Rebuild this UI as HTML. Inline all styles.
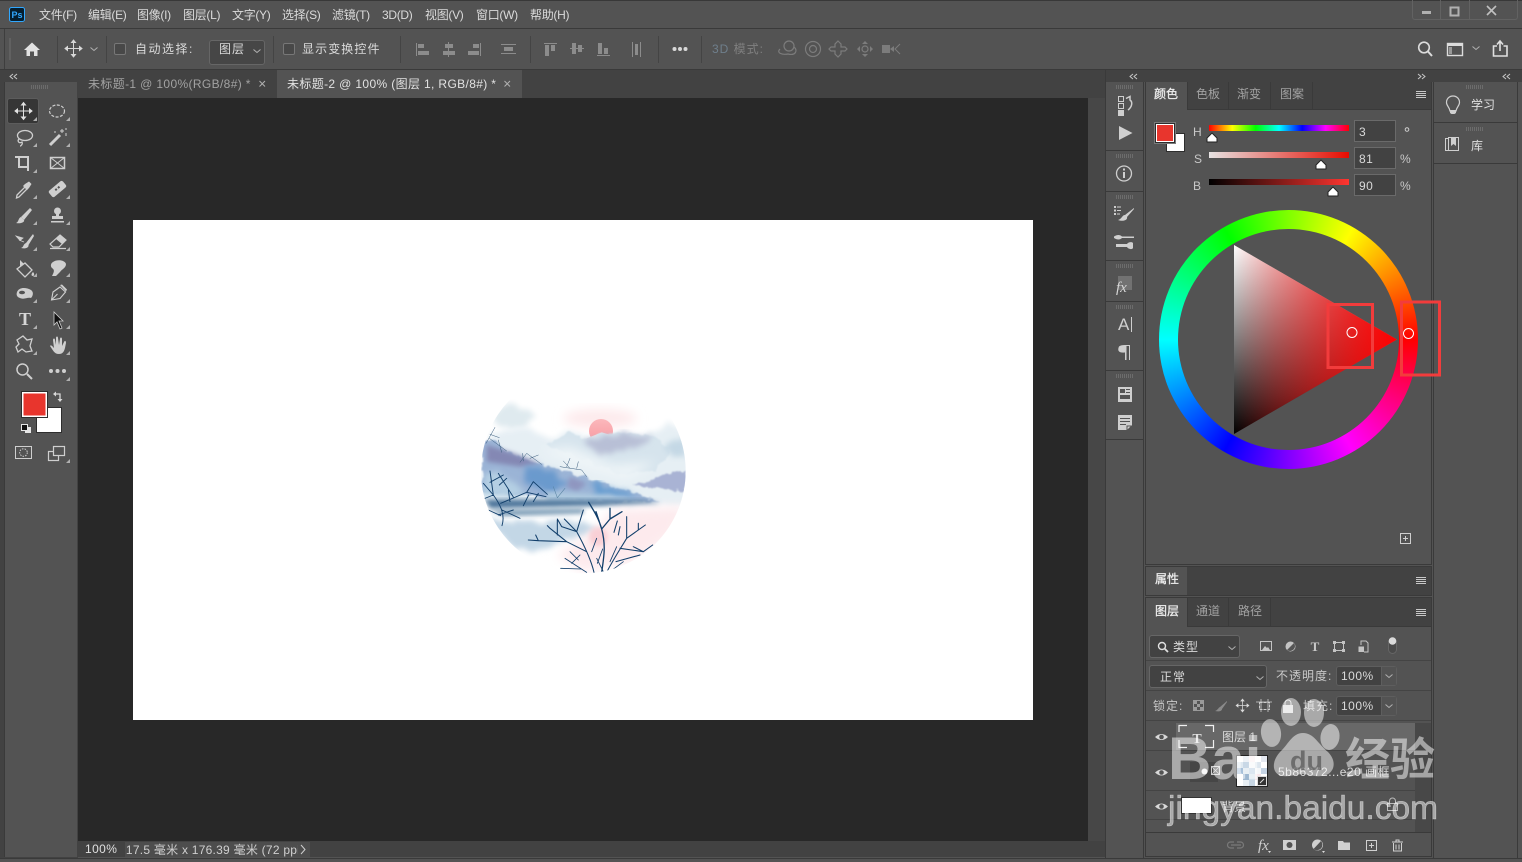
<!DOCTYPE html>
<html lang="zh">
<head>
<meta charset="utf-8">
<title>Photoshop</title>
<style>
html,body{margin:0;padding:0;width:1522px;height:862px;overflow:hidden;background:#535353}
body{position:relative;font-family:"Liberation Sans","Noto Sans CJK SC",sans-serif;font-size:12px;color:#d8d8d8}
.b{position:absolute;box-sizing:border-box}
.t{position:absolute;white-space:nowrap;line-height:14px;font-size:12px;color:#dadada}
.m{letter-spacing:-.3px}
.d{color:#a2a2a2}
.dd{color:#808080}
.s{-webkit-text-stroke:.3px currentColor;color:#ececec}
svg{position:absolute;left:0;top:0;overflow:visible}
.wm{position:absolute;white-space:nowrap;color:rgba(255,255,255,.5);line-height:1}
</style>
</head>
<body>
<!-- frame lines -->
<div class="b" style="left:0;top:0;width:1522px;height:1px;background:#383838"></div>
<div class="b" style="left:0;top:28px;width:1522px;height:1px;background:#3a3a3a"></div>
<div class="b" style="left:4px;top:29px;width:1518px;height:40px;background:#535353;border-left:1px solid #3e3e3e"></div>
<div class="b" style="left:0;top:69px;width:1522px;height:1px;background:#3a3a3a"></div>
<!-- window control box -->
<div class="b" style="left:1412px;top:0;width:106px;height:20px;border:1px solid #626262;border-top:0;border-radius:0 0 3px 3px"></div>
<div class="b" style="left:1440px;top:0;width:1px;height:19px;background:#626262"></div>
<div class="b" style="left:1469px;top:0;width:1px;height:19px;background:#626262"></div>

<!-- left tools -->
<div class="b" style="left:0;top:70px;width:78px;height:788px;background:#424242"></div>
<div class="b" style="left:4px;top:82px;width:73px;height:775px;background:#535353;border-left:1px solid #3a3a3a"></div>
<div class="b" style="left:7px;top:98px;width:32px;height:26px;background:#363636;border:1px solid #5c5c5c;border-radius:3px"></div>

<!-- tabs -->
<div class="b" style="left:78px;top:70px;width:1027px;height:28px;background:#424242"></div>
<div class="b" style="left:277px;top:70px;width:245px;height:28px;background:#535353"></div>
<!-- canvas -->
<div class="b" style="left:78px;top:98px;width:1010px;height:743px;background:#282828"></div>
<div class="b" style="left:1088px;top:98px;width:17px;height:743px;background:#474747"></div>
<div class="b" style="left:133px;top:220px;width:900px;height:500px;background:#fff"></div>
<!-- status -->
<div class="b" style="left:78px;top:841px;width:1027px;height:16px;background:#424242"></div>
<div class="b" style="left:125px;top:842px;width:185px;height:15px;background:#4d4d4d"></div>
<div class="b" style="left:0;top:858px;width:1522px;height:1px;background:#3a3a3a"></div>

<!-- right dock -->
<div class="b" style="left:1105px;top:70px;width:417px;height:12px;background:#424242"></div>
<div class="b" style="left:1105px;top:70px;width:1px;height:788px;background:#3a3a3a"></div>
<div class="b" style="left:1106px;top:82px;width:38px;height:776px;background:#535353;border-right:1px solid #3a3a3a"></div>
<div class="b" style="left:1106px;top:150px;width:37px;height:1px;background:#3a3a3a"></div>
<div class="b" style="left:1106px;top:191px;width:37px;height:1px;background:#3a3a3a"></div>
<div class="b" style="left:1106px;top:260px;width:37px;height:1px;background:#3a3a3a"></div>
<div class="b" style="left:1106px;top:301px;width:37px;height:1px;background:#3a3a3a"></div>
<div class="b" style="left:1106px;top:370px;width:37px;height:1px;background:#3a3a3a"></div>
<div class="b" style="left:1106px;top:439px;width:37px;height:1px;background:#3a3a3a"></div>

<div class="b" style="left:1145px;top:82px;width:287px;height:483px;border:1px solid #3a3a3a;border-top:0;background:#535353"></div>
<div class="b" style="left:1146px;top:82px;width:285px;height:28px;background:#424242;border-bottom:1px solid #3a3a3a"></div>
<div class="b" style="left:1146px;top:82px;width:41px;height:28px;background:#535353"></div>
<div class="b" style="left:1187px;top:82px;width:1px;height:27px;background:#3a3a3a"></div>
<div class="b" style="left:1228px;top:82px;width:1px;height:27px;background:#3a3a3a"></div>
<div class="b" style="left:1270px;top:82px;width:1px;height:27px;background:#3a3a3a"></div>
<div class="b" style="left:1312px;top:82px;width:1px;height:27px;background:#3a3a3a"></div>

<!-- sliders -->
<div class="b" style="left:1209px;top:125px;width:140px;height:6px;background:linear-gradient(to right,#f00,#ff0 16.6%,#0f0 33.3%,#0ff 50%,#00f 66.6%,#f0f 83.3%,#f00)"></div>
<div class="b" style="left:1209px;top:152px;width:140px;height:6px;background:linear-gradient(to right,#e6e2e2,#e60c00)"></div>
<div class="b" style="left:1209px;top:179px;width:140px;height:6px;background:linear-gradient(to right,#000,#ff3530)"></div>
<div class="b" style="left:1354px;top:120px;width:42px;height:22px;background:#424242;border:1px solid #6a6a6a"></div>
<div class="b" style="left:1354px;top:147px;width:42px;height:22px;background:#424242;border:1px solid #6a6a6a"></div>
<div class="b" style="left:1354px;top:174px;width:42px;height:22px;background:#424242;border:1px solid #6a6a6a"></div>
<div class="b" style="left:1166px;top:133px;width:19px;height:19px;background:#fff;border:1px solid #2e2e2e"></div>
<div class="b" style="left:1156px;top:124px;width:18px;height:18px;background:#e8352d;border:1px solid #fff;outline:1px solid #2e2e2e;box-shadow:0 0 0 2px #7a7a7a"></div>

<!-- wheel -->
<div class="b" style="left:1159px;top:210px;width:259px;height:259px;border-radius:50%;background:conic-gradient(from 90deg,#f00,#f0f 60deg,#00f 120deg,#0ff 180deg,#0f0 240deg,#ff0 300deg,#f00 360deg)"></div>
<div class="b" style="left:1178px;top:229px;width:221px;height:221px;border-radius:50%;background:#535353"></div>
<div class="b" style="left:1234px;top:245px;width:163px;height:189px;clip-path:polygon(0 0,100% 50%,0 100%);background:linear-gradient(to right,rgba(255,0,0,0),rgba(255,0,0,.3) 25%,rgba(255,0,0,.56) 50%,rgba(255,0,0,.8) 75%,rgba(255,0,0,1)),linear-gradient(#fff,#000)"></div>

<!-- property & layers panels -->
<div class="b" style="left:1145px;top:566px;width:287px;height:30px;background:#424242;border:1px solid #3a3a3a"></div>
<div class="b" style="left:1146px;top:567px;width:41px;height:28px;background:#535353"></div>
<div class="b" style="left:1145px;top:597px;width:287px;height:260px;background:#535353;border:1px solid #3a3a3a"></div>
<div class="b" style="left:1146px;top:598px;width:285px;height:29px;background:#424242;border-bottom:1px solid #3a3a3a"></div>
<div class="b" style="left:1146px;top:598px;width:41px;height:29px;background:#535353"></div>
<div class="b" style="left:1228px;top:598px;width:1px;height:28px;background:#3a3a3a"></div>
<div class="b" style="left:1187px;top:598px;width:1px;height:28px;background:#3a3a3a"></div>
<div class="b" style="left:1270px;top:598px;width:1px;height:28px;background:#3a3a3a"></div>
<div class="b" style="left:1146px;top:660px;width:285px;height:1px;background:#444"></div>
<div class="b" style="left:1146px;top:690px;width:285px;height:1px;background:#444"></div>
<div class="b" style="left:1146px;top:720px;width:285px;height:1px;background:#444"></div>
<div class="b" style="left:1149px;top:635px;width:91px;height:23px;background:#424242;border:1px solid #666;border-radius:3px"></div>
<div class="b" style="left:1149px;top:665px;width:118px;height:23px;background:#424242;border:1px solid #666;border-radius:3px"></div>
<div class="b" style="left:1336px;top:666px;width:61px;height:20px;background:#424242;border:1px solid #5e5e5e;border-radius:3px"></div>
<div class="b" style="left:1381px;top:667px;width:15px;height:18px;background:#535353;border-left:1px solid #5e5e5e"></div>
<div class="b" style="left:1336px;top:696px;width:61px;height:20px;background:#424242;border:1px solid #5e5e5e;border-radius:3px"></div>
<div class="b" style="left:1381px;top:697px;width:15px;height:18px;background:#535353;border-left:1px solid #5e5e5e"></div>
<!-- layer rows -->
<div class="b" style="left:1176px;top:723px;width:239px;height:27px;background:#686868"></div>
<div class="b" style="left:1415px;top:723px;width:16px;height:109px;background:#484848"></div>
<div class="b" style="left:1146px;top:750px;width:269px;height:1px;background:#444"></div>
<div class="b" style="left:1146px;top:790px;width:269px;height:1px;background:#444"></div>
<div class="b" style="left:1146px;top:819px;width:269px;height:1px;background:#444"></div>
<div class="b" style="left:1146px;top:832px;width:285px;height:1px;background:#3a3a3a"></div>
<div class="b" style="left:1181px;top:797px;width:31px;height:17px;background:#fff;border:1px solid #333"></div>

<!-- far right -->
<div class="b" style="left:1433px;top:82px;width:85px;height:776px;background:#535353;border:1px solid #3a3a3a;border-top:0;border-bottom:0"></div>
<div class="b" style="left:1434px;top:122px;width:83px;height:1px;background:#3a3a3a"></div>
<div class="b" style="left:1434px;top:163px;width:83px;height:1px;background:#3a3a3a"></div>

<!-- option controls -->
<div class="b" style="left:114px;top:43px;width:12px;height:12px;border:1px solid #777;border-radius:2px;background:#484848"></div>
<div class="b" style="left:283px;top:43px;width:12px;height:12px;border:1px solid #777;border-radius:2px;background:#484848"></div>
<div class="b" style="left:209px;top:40px;width:56px;height:25px;background:#464646;border:1px solid #666;border-radius:3px"></div>

<!-- landscape -->
<svg style="left:470px;top:395px" width="230" height="185" viewBox="0 0 690 555">
<defs>
<clipPath id="cc"><circle cx="340" cy="228" r="307"/></clipPath>
<filter id="b6" x="-30%" y="-30%" width="160%" height="160%"><feGaussianBlur stdDeviation="7"/></filter>
<filter id="b14" x="-30%" y="-30%" width="160%" height="160%"><feGaussianBlur stdDeviation="16"/></filter>
<filter id="w" x="-20%" y="-20%" width="140%" height="140%"><feTurbulence type="fractalNoise" baseFrequency=".035" numOctaves="3" seed="4" result="n"/><feDisplacementMap in="SourceGraphic" in2="n" scale="26" xChannelSelector="R" yChannelSelector="G"/><feGaussianBlur stdDeviation="2.500"/></filter>
<filter id="ws" x="-20%" y="-20%" width="140%" height="140%"><feTurbulence type="fractalNoise" baseFrequency=".03" numOctaves="3" seed="9" result="n"/><feDisplacementMap in="SourceGraphic" in2="n" scale="34" xChannelSelector="R" yChannelSelector="G"/><feGaussianBlur stdDeviation="9"/></filter>
<linearGradient id="sun" x1="0" y1="0" x2="0" y2="1"><stop offset="0" stop-color="#fbb8bc"/><stop offset="1" stop-color="#f9989f"/></linearGradient>
</defs>
<g clip-path="url(#cc)">
<ellipse cx="130" cy="65" rx="60" ry="36" fill="#dfeaef" filter="url(#ws)"/>
<ellipse cx="390" cy="70" rx="110" ry="28" fill="#fdeaec" filter="url(#b14)"/>
<path d="M60 120L160 95L240 130L300 110L350 130L400 115L550 120L600 85L660 120L660 330L30 330Z" fill="#e6eff4" filter="url(#ws)"/>
<circle cx="393" cy="108" r="36" fill="url(#sun)"/>
<path d="M350 130L395 112L440 125L440 150L350 150Z" fill="#e2e2e8"/>
<path d="M225 150L300 112L350 130L395 117L480 114L560 125L600 170L560 225L450 240L330 190Z" fill="#d6e4ed" filter="url(#w)"/>
<path d="M345 135L480 116L550 128L490 160L380 180Z" fill="#b8bfd6" filter="url(#ws)"/>
<path d="M585 150L650 125L650 190L605 180Z" fill="#c4d8e5" filter="url(#ws)"/>
<path d="M210 165L300 155L430 210L560 200L470 255L330 215Z" fill="#eff5f8" filter="url(#b14)"/>
<path d="M35 135L70 135L110 170L200 205L280 225L380 262L480 290L570 322L420 320L230 305L35 290Z" fill="#9bb4d6" filter="url(#w)"/>
<path d="M50 150L130 175L210 205L150 215L50 200Z" fill="#8488b4" filter="url(#b6)"/>
<path d="M165 212L240 228L300 262L250 290L165 270Z" fill="#6a9acd" filter="url(#ws)"/>
<path d="M300 245L350 265L320 290L290 275Z" fill="#8f96c0" filter="url(#b6)"/>
<path d="M360 265L470 283L505 308L370 302Z" fill="#639bd0" filter="url(#ws)"/>
<path d="M35 230L110 240L170 305L40 305Z" fill="#b4cfe3" filter="url(#ws)"/>
<path d="M230 290L420 300L520 318L230 318Z" fill="#adc9df" filter="url(#b6)"/>
<path d="M490 272L590 240L650 222L650 290L580 280Z" fill="#a9b3d4" filter="url(#w)"/>
<path d="M45 314L300 314L520 316L572 325L400 332L60 340Z" fill="#4f779c" filter="url(#b6)"/>
<path d="M60 344L340 340L340 356L100 364Z" fill="#7f9fb8" filter="url(#b6)"/>
<path d="M40 372L140 380L340 378L400 400L200 465L140 460Z" fill="#c3d7e6" filter="url(#ws)"/>
<path d="M80 368L330 372" stroke="#f4f7f9" stroke-width="6" fill="none" filter="url(#b6)"/>
<path d="M430 345L650 335L610 420L500 500L340 530L260 480L370 410Z" fill="#fdeaed" filter="url(#b14)"/>
<circle cx="385" cy="425" r="28" fill="#f9d0d6" filter="url(#b6)"/>
<g fill="none" stroke="#123f6b" stroke-linecap="round" stroke-linejoin="round">
<path d="M395 532C402 485 408 450 395 402C387 372 372 348 356 322M395 402L420 372L456 350M420 372L420 340M395 402L378 350" stroke-width="4"/>
<path d="M372 532C362 490 342 450 320 410L283 372M320 410L340 345M320 410L275 395L262 372M350 470L290 440L240 400M290 440L205 437L175 435M205 437L197 420M262 420L262 375M240 400L232 392" stroke-width="3.200"/>
<path d="M412 528C432 490 452 460 470 430L526 390M470 430L470 365M450 460L520 470L548 450M520 470L490 455M438 500L510 480M432 412L442 378M505 404L505 385M450 395L445 420M490 510L530 490" stroke-width="3.200"/>
<path d="M350 532L285 490M332 522L272 520M382 505L398 462M305 505L330 480M365 470L380 430M420 500L440 455M300 470L325 495M400 530L380 490M420 530L460 500" stroke-width="2.600"/>
<path d="M96 392C106 360 92 330 70 300L40 265M70 300L60 228M92 325L170 292L228 305M130 306L85 235M170 292L190 260L232 298M160 332L176 300M96 345L150 370M70 300L40 312M60 262L100 240M55 345L92 362M120 320L115 285M190 320L205 295M85 360L130 345M110 250L88 270" stroke-width="2.800"/>
<path d="M262 308L250 275M262 308L285 280" stroke-width="1.600" stroke="#55809f"/>
<path d="M48 145L75 97M58 130L110 168M85 135L95 172M60 118L88 128M150 202L170 175L215 208M180 190L205 180M158 175L160 198M270 215L335 225L350 245M290 215L300 190M320 220L325 200M300 220L280 198" stroke-width="1.500" stroke="#3a5c7c"/>
</g>
</g>
</svg>

<!-- icons -->
<svg width="1522" height="862" viewBox="0 0 1522 862">
<defs>
<g id="mv" fill="none" stroke="currentColor" stroke-width="1"><path d="M0-7V7M-7 0H7"/><path d="M-2-6L0-8.500L2-6ZM-2 6L0 8.500L2 6ZM-6-2L-8.500 0L-6 2ZM6-2L8.500 0L6 2Z" fill="currentColor"/></g>
<polygon id="cr" points="4,0 4,4 0,4" fill="#b0b0b0"/>
<path id="chev" d="M-3.500-1.500L0 1.500L3.500-1.500" fill="none" stroke="#b0b0b0" stroke-width="1"/>
<g id="eye"><path d="M-6.500 0Q0-6 6.500 0Q0 6-6.500 0Z" fill="#d8d8d8"/><circle r="2.300" fill="#535353"/></g>
<g id="ham" stroke="#c8c8c8" stroke-width="1"><path d="M-5-3.500H5M-5-1.500H5M-5 .5H5M-5 2.500H5"/></g>
<g id="grip" fill="#6c6c6c"><rect x="-9" width="1" height="4"/><rect x="-7" width="1" height="4"/><rect x="-5" width="1" height="4"/><rect x="-3" width="1" height="4"/><rect x="-1" width="1" height="4"/><rect x="1" width="1" height="4"/><rect x="3" width="1" height="4"/><rect x="5" width="1" height="4"/><rect x="7" width="1" height="4"/></g>
<path id="thumb" d="M0-5L5 0V4H-5V0Z" fill="#fff" stroke="#222" stroke-width="1" stroke-linejoin="round"/>
</defs>

<!-- ps logo -->
<rect x="9.500" y="7.500" width="15" height="14" rx="2" fill="#061e2e" stroke="#31a8ff" stroke-width="1"/>
<text x="17" y="18" text-anchor="middle" font-size="9" font-weight="bold" fill="#31a8ff" font-family="Liberation Sans">Ps</text>
<!-- window btns -->
<rect x="1422" y="11" width="9" height="3" fill="#b0b0b0"/>
<rect x="1450.500" y="7.500" width="8" height="8" fill="none" stroke="#b0b0b0" stroke-width="2"/>
<path d="M1487 6L1496 15M1496 6L1487 15" stroke="#c0c0c0" stroke-width="1.600"/>

<!-- options left -->
<rect x="9" y="38" width="2" height="22" fill="#6b6b6b" opacity=".6"/>
<path d="M24 50L32 42.500L40 50H37.500V56H34V51.500H30V56H26.500V50Z" fill="#e2e2e2"/>
<g color="#d8d8d8" transform="translate(73.500 48.500)"><use href="#mv"/></g>
<use href="#chev" x="94" y="49"/>
<use href="#chev" x="257" y="51"/>
<g fill="#444"><rect x="57" y="36" width="1" height="27"/><rect x="106" y="36" width="1" height="27"/><rect x="273" y="36" width="1" height="27"/><rect x="400" y="36" width="1" height="27"/><rect x="530" y="36" width="1" height="27"/><rect x="658" y="36" width="1" height="27"/><rect x="701" y="36" width="1" height="27"/></g>
<!-- align -->
<g fill="#8c8c8c">
<rect x="416" y="43" width="1" height="13"/><rect x="418" y="44" width="6" height="4"/><rect x="418" y="51" width="11" height="4"/>
<rect x="448" y="42" width="1" height="15"/><rect x="445" y="44" width="8" height="4"/><rect x="443" y="51" width="12" height="4"/>
<rect x="480" y="43" width="1" height="13"/><rect x="473" y="44" width="6" height="4"/><rect x="468" y="51" width="11" height="4"/>
<rect x="501" y="44" width="15" height="1"/><rect x="504" y="47" width="9" height="4"/><rect x="501" y="53" width="15" height="1"/>
<rect x="544" y="43" width="13" height="1"/><rect x="545" y="45" width="4" height="11"/><rect x="551" y="45" width="4" height="6"/>
<rect x="570" y="48" width="14" height="1"/><rect x="572" y="43" width="4" height="11"/><rect x="578" y="45" width="4" height="7"/>
<rect x="597" y="55" width="13" height="1"/><rect x="598" y="43" width="4" height="11"/><rect x="604" y="48" width="4" height="6"/>
<rect x="632" y="42" width="1" height="15"/><rect x="640" y="42" width="1" height="15"/><rect x="635" y="44" width="3" height="11"/>
</g>
<g fill="#d8d8d8"><circle cx="674.500" cy="49" r="2"/><circle cx="680" cy="49" r="2"/><circle cx="685.500" cy="49" r="2"/></g>
<!-- 3D icons -->
<g fill="none" stroke="#7c7c7c" stroke-width="1.200">
<circle cx="789" cy="46" r="5"/><path d="M780 49C776 53 782 55 788 54C796 56 798 50 794 47"/>
<circle cx="813" cy="49" r="7.500"/><circle cx="813" cy="49" r="3.500"/>
<path d="M838 41L841 44V47H845L847 49L845 51H841V54L838 57L835 54V51H831L829 49L831 47H835V44Z"/>
<circle cx="865" cy="49" r="3"/>
</g>
<g fill="#7c7c7c">
<path d="M865 41L868 44H862ZM865 57L868 54H862ZM857 49L860 46V52ZM873 49L870 46V52Z"/>
<rect x="882" y="45" width="8" height="8"/><path d="M890 49L894 46V52Z"/>
</g>
<path d="M900 44L895 49L900 54" fill="none" stroke="#7c7c7c"/>
<!-- right options -->
<circle cx="1424" cy="47.500" r="5.300" fill="none" stroke="#dcdcdc" stroke-width="1.600"/><path d="M1428 51.500L1432 56" stroke="#dcdcdc" stroke-width="2"/>
<rect x="1447.500" y="43.500" width="15" height="12" fill="none" stroke="#dcdcdc" stroke-width="1.400"/><rect x="1447" y="43" width="16" height="3" fill="#dcdcdc"/><rect x="1449" y="47" width="3" height="7" fill="#999"/>
<use href="#chev" x="1476" y="48"/>
<path d="M1497 46H1493.500V56H1507V46H1503.500" fill="none" stroke="#e0e0e0" stroke-width="1.600"/><path d="M1500 51V42M1497 44.500L1500 41L1503 44.500" fill="none" stroke="#e0e0e0" stroke-width="1.600"/>

<!-- collapse arrows -->
<g fill="none" stroke="#c8c8c8" stroke-width="1">
<path d="M13 74L10 76.500L13 79M17 74L14 76.500L17 79"/>
<path d="M1133 74L1130 76.500L1133 79M1137 74L1134 76.500L1137 79"/>
<path d="M1418 74L1421 76.500L1418 79M1422 74L1425 76.500L1422 79"/>
<path d="M1506 74L1503 76.500L1506 79M1510 74L1507 76.500L1510 79"/>
</g>
<use href="#grip" x="40" y="85"/>
<use href="#grip" x="1125" y="85"/><use href="#grip" x="1125" y="154"/><use href="#grip" x="1125" y="195"/><use href="#grip" x="1125" y="264"/><use href="#grip" x="1125" y="305"/><use href="#grip" x="1125" y="374"/>
<use href="#grip" x="1475" y="85"/><use href="#grip" x="1475" y="127"/>

<!-- tab close -->
<path d="M259.500 81L265 86.500M265 81L259.500 86.500M504.500 81L510 86.500M510 81L504.500 86.500" stroke="#b0b0b0" stroke-width="1"/>

<!-- tool corners -->
<g>
<use href="#cr" x="33" y="117"/><use href="#cr" x="66" y="117"/>
<use href="#cr" x="33" y="143"/><use href="#cr" x="66" y="143"/>
<use href="#cr" x="33" y="169"/>
<use href="#cr" x="33" y="195"/><use href="#cr" x="66" y="195"/>
<use href="#cr" x="33" y="221"/><use href="#cr" x="66" y="221"/>
<use href="#cr" x="33" y="247"/><use href="#cr" x="66" y="247"/>
<use href="#cr" x="33" y="273"/><use href="#cr" x="66" y="273"/>
<use href="#cr" x="33" y="299"/><use href="#cr" x="66" y="299"/>
<use href="#cr" x="33" y="325"/><use href="#cr" x="66" y="325"/>
<use href="#cr" x="33" y="351"/><use href="#cr" x="66" y="351"/>
<use href="#cr" x="66" y="377"/><use href="#cr" x="66" y="459"/>
</g>
<!-- tools -->
<g color="#e2e2e2" transform="translate(23.500 111)"><use href="#mv"/></g>
<ellipse cx="57" cy="111" rx="7.500" ry="6" fill="none" stroke="#cfcfcf" stroke-width="1.200" stroke-dasharray="3 1.500"/>
<g fill="none" stroke="#cfcfcf" stroke-width="1.300">
<ellipse cx="25" cy="135.500" rx="7.500" ry="5"/><path d="M19 139C17 141 19 144 22 142C23 144 21 146 20 146"/>
<path d="M50 145L60 135" stroke-width="3"/>
<path d="M62 129V133M60 131H64M66 133V136M55 131V133M66 128V130" stroke-width="1"/>
<path d="M15 157H19V167H29M19 157H28V171" stroke-width="2"/>
<rect x="50.500" y="157.500" width="14" height="11" stroke-width="1.500"/><path d="M50.500 157.500L64.500 168.500M64.500 157.500L50.500 168.500" stroke-width="1"/>
</g>
<g fill="#cfcfcf">
<path d="M17 195L25 187L27 189L19 197L16.500 198Z" fill="none" stroke="#cfcfcf" stroke-width="1.300"/>
<path d="M25 184L29 181.500L31.500 184L29 188L27 190L23 186Z"/>
<g transform="rotate(-40 57.500 189)"><rect x="48.500" y="185" width="18" height="8" rx="2"/><rect x="55" y="187.500" width="2" height="2" fill="#535353"/><rect x="58.500" y="187.500" width="2" height="2" fill="#535353"/></g>
<path d="M30 208L21 217L24 220L32 210Z"/><path d="M21 217C18 218 19 222 16 223C21 224 25 222 24 220Z"/>
<circle cx="57.500" cy="211" r="3.500"/><path d="M56 213H59V216H63V219H52V216H56ZM51 221H64V222.500H51Z"/>
<path d="M33 234L26 243L28.500 245L34 236ZM26 243C23 244 24 247 21 248C25 249 29 248 28.500 245Z"/>
<path d="M16 236L23 238L20 240.500ZM19 240L24 242" stroke="#cfcfcf" stroke-width=".8"/>
<path d="M60 235L66 240L59 247H53L50 244ZM50 248.500H66" fill="none" stroke="#cfcfcf" stroke-width="1.200"/>
<path d="M60 235L66 240L62 244L56 239Z"/>
<path d="M25 263L32 270L25 277L17 269Z" fill="none" stroke="#cfcfcf" stroke-width="1.300"/><path d="M20 260L24 264L20 266ZM33 272C35 274 34 276 33 276C31 276 31 274 33 272Z"/>
<path d="M53 262C57 259 65 260 66 264C66 268 62 269 60 272L56 276H52C54 272 55 270 52 268C50 266 51 263 53 262Z"/>
<path d="M17 292C19 287 26 287 31 290C34 292 33 296 31 298C27 297 24 300 20 298C17 297 16 295 17 292Z"/><ellipse cx="22" cy="292.500" rx="3" ry="1.800" fill="#535353"/>
<path d="M51.500 300L53 292L60 287L65.500 292L60 298.500ZM51.500 300L57.500 294" fill="none" stroke="#cfcfcf" stroke-width="1.100"/><path d="M60 285L62 284.500L67 289.500L66 291.500Z"/>
<path d="M54 312V325L57 322L60 329L62 328L59 321H63Z" fill="#111" stroke="#cfcfcf" stroke-width=".8"/>
<path d="M17 340L23 336L27 340L32 339L30 346L32 351L26 352L22 349L18 352L16 347L19 344Z" fill="none" stroke="#cfcfcf" stroke-width="1.300"/>
<path d="M50 346C51 344 53 347 54 348L53 340C53 338 55 338 55 340L56 345L56 338C56 336 58 336 58 338L59 345L60 339C60 337 62 337 62 339L62 346L64 342C65 340 66 341 66 343C65 347 65 354 59 354C54 354 53 350 50 346Z"/>
</g>
<text x="25" y="325" text-anchor="middle" font-family="Liberation Serif" font-weight="bold" font-size="18" fill="#d6d6d6">T</text>
<circle cx="22.500" cy="369.500" r="5.500" fill="none" stroke="#cfcfcf" stroke-width="1.500"/><path d="M27 374L32 379" stroke="#cfcfcf" stroke-width="2"/>
<g fill="#cfcfcf"><circle cx="51" cy="371" r="2"/><circle cx="57.500" cy="371" r="2"/><circle cx="64" cy="371" r="2"/></g>
<!-- colors -->
<rect x="36.500" y="407.500" width="25" height="25" fill="#fff" stroke="#2e2e2e"/>
<rect x="22.500" y="392.500" width="24" height="24" fill="#e8352d" stroke="#fff" stroke-width="2"/>
<rect x="21.500" y="391.500" width="26" height="26" fill="none" stroke="#2e2e2e"/>
<rect x="25" y="427" width="6" height="6" fill="#e6e6e6"/><rect x="21.500" y="424.500" width="6" height="6" fill="#111" stroke="#e6e6e6"/>
<path d="M55 394H60V399" fill="none" stroke="#d8d8d8" stroke-width="1.300"/><path d="M53 394L56 391.500V396.500ZM60 402L57.500 399H62.500Z" fill="#d8d8d8"/>
<rect x="15.500" y="446.500" width="16" height="12" fill="none" stroke="#cfcfcf"/><circle cx="23.500" cy="452.500" r="3.800" fill="none" stroke="#cfcfcf" stroke-dasharray="1.500 1.200"/>
<rect x="48.500" y="451.500" width="10" height="9" fill="none" stroke="#cfcfcf" stroke-width="1.200"/><rect x="53.500" y="446.500" width="11" height="9" fill="#535353" stroke="#cfcfcf" stroke-width="1.200"/>

<!-- dock icons -->
<g fill="#cfcfcf">
<rect x="1118.500" y="96.500" width="5" height="5" fill="none" stroke="#cfcfcf"/><rect x="1118.500" y="103.500" width="5" height="5" fill="none" stroke="#cfcfcf"/><rect x="1118" y="110" width="6" height="6"/>
<path d="M1126 98.500L1130 96.500V100C1133 102 1132 107 1128 110" fill="none" stroke="#cfcfcf" stroke-width="1.500"/>
<path d="M1119 126V140L1132.500 133Z"/>
<circle cx="1124" cy="173.500" r="7.500" fill="none" stroke="#cfcfcf" stroke-width="1.300"/><rect x="1123" y="172" width="2" height="6"/><rect x="1123" y="168.500" width="2" height="2"/>
<path d="M1114 206H1116V208H1114ZM1114 209.500H1116V211.500H1114ZM1114 213H1116V215H1114ZM1117 206.500H1121V207.500H1117ZM1117 210H1121V211H1117ZM1117 213.500H1120V214.500H1117Z"/>
<path d="M1134 208L1125 215L1127 217L1134 209ZM1125 215C1122 215 1122 219 1118 220C1123 222 1128 220 1127 217Z"/>
<path d="M1114 236.500C1117 234.500 1120 234.500 1122 236.500H1134V238H1122C1120 240 1117 240 1114 238ZM1116 244H1127C1128 242 1132 241.500 1133 243V248C1132 250 1128 249 1127 247H1116Z"/>
<rect x="1118" y="276" width="14" height="14" fill="#727272"/>
<path d="M1125 353V352.500C1119 353 1117 351 1119 346.500C1120 345.500 1122 345 1125 345Z"/><rect x="1125" y="345" width="1.500" height="15"/><rect x="1129" y="345" width="1" height="15"/><rect x="1125" y="345" width="5" height="1"/>
<rect x="1118" y="387" width="14" height="15"/>
<rect x="1120" y="389" width="5" height="4" fill="#535353"/><rect x="1126" y="389" width="4" height="1" fill="#535353"/><rect x="1126" y="392" width="4" height="1" fill="#535353"/><rect x="1120" y="395" width="10" height="4" fill="#535353"/>
<path d="M1118 415H1132V425L1127 430H1118Z"/><path d="M1120 418.500H1130M1120 421.500H1130M1120 424.500H1126" stroke="#535353"/><path d="M1127 430V426H1131" fill="none" stroke="#535353"/>
</g>
<text x="1116" y="292" font-family="Liberation Serif" font-style="italic" font-size="15" fill="#d6d6d6">fx</text>
<text x="1118" y="330" font-family="Liberation Sans" font-size="17" fill="#cfcfcf">A</text><rect x="1131" y="317" width="1" height="15" fill="#cfcfcf"/>

<!-- far right icons -->
<path d="M1453 96C1449 96 1446.500 99 1446.500 102.500C1446.500 106 1449.500 107 1450 111H1456C1456.500 107 1459.500 106 1459.500 102.500C1459.500 99 1457 96 1453 96Z" fill="none" stroke="#d0d0d0" stroke-width="1.200"/><path d="M1450 110H1456V113L1454.500 114H1451.500L1450 113Z" fill="#d0d0d0"/>
<rect x="1445.500" y="138.500" width="10" height="12" fill="none" stroke="#cfcfcf"/><rect x="1448.500" y="137.500" width="10" height="13" fill="#535353" stroke="#cfcfcf"/><path d="M1451 138H1456V146L1453.500 144L1451 146Z" fill="#cfcfcf"/>

<!-- color panel -->
<use href="#ham" x="1421" y="95"/>
<use href="#thumb" x="1212" y="138"/><use href="#thumb" x="1321" y="165"/><use href="#thumb" x="1333" y="192"/>
<circle cx="1407" cy="129.500" r="1.800" fill="none" stroke="#cfcfcf"/>
<rect x="1400.500" y="533.500" width="10" height="10" fill="none" stroke="#cfcfcf"/><path d="M1403 538.500H1408M1405.500 536V541" stroke="#cfcfcf"/>
<circle cx="1352" cy="332.500" r="5" fill="none" stroke="#fff" stroke-width="1"/>
<circle cx="1408.500" cy="333.500" r="5" fill="none" stroke="#fff" stroke-width="1"/>
<rect x="1328" y="304.500" width="44.500" height="63" fill="none" stroke="#f23c3c" stroke-width="3"/>
<rect x="1401.500" y="302" width="38" height="73" fill="none" stroke="#f23c3c" stroke-width="3"/>

<!-- layers -->
<use href="#ham" x="1421" y="581"/><use href="#ham" x="1421" y="613"/>
<circle cx="1162" cy="646" r="3.500" fill="none" stroke="#e0e0e0" stroke-width="1.400"/><path d="M1164.500 648.500L1168 652" stroke="#e0e0e0" stroke-width="1.800"/>
<use href="#chev" x="1232" y="648"/><use href="#chev" x="1260" y="678"/><use href="#chev" x="1389" y="676"/><use href="#chev" x="1389" y="706"/>
<rect x="1260.500" y="641.500" width="11" height="9" fill="none" stroke="#c4c4c4"/><path d="M1262 650L1265 646L1267 648L1268 647L1270 650Z" fill="#c4c4c4"/>
<circle cx="1290.500" cy="646.500" r="5" fill="#c4c4c4"/><path d="M1294 643L1287 650A5 5 0 0 0 1294 643Z" fill="#555"/>
<text x="1315" y="651" text-anchor="middle" font-family="Liberation Serif" font-weight="bold" font-size="13" fill="#c8c8c8">T</text>
<rect x="1334.500" y="642.500" width="9" height="8" fill="none" stroke="#c4c4c4"/><g fill="#c4c4c4"><rect x="1333" y="641" width="3" height="3"/><rect x="1342" y="641" width="3" height="3"/><rect x="1333" y="649" width="3" height="3"/><rect x="1342" y="649" width="3" height="3"/></g>
<path d="M1361 645V641H1366L1368 643V652H1364" fill="none" stroke="#c4c4c4"/><rect x="1358.500" y="646.500" width="5.500" height="5.500" fill="#c4c4c4"/>
<rect x="1388.500" y="638.500" width="8" height="15" rx="4" fill="#4a4a4a" stroke="#666"/><circle cx="1392.500" cy="641" r="3.800" fill="#dadada"/>
<g fill="#9a9a9a"><rect x="1193.500" y="700.500" width="10" height="10" fill="none" stroke="#9a9a9a"/><rect x="1194" y="701" width="3" height="3"/><rect x="1200" y="701" width="3" height="3"/><rect x="1197" y="704" width="3" height="3"/><rect x="1194" y="707" width="3" height="3"/><rect x="1200" y="707" width="3" height="3"/></g>
<path d="M1227 701L1220 707L1222 709L1227 702ZM1220 707C1218 708 1218 710 1215 711C1219 712 1222 711 1222 709Z" fill="#8a8a8a"/>
<g color="#dadada" transform="translate(1242.500 705.500) scale(.75)"><use href="#mv"/></g>
<rect x="1259.500" y="702.500" width="10" height="7" fill="none" stroke="#cfcfcf" stroke-dasharray="3 1"/><path d="M1256 702H1272M1268 699V712M1261 699V712" stroke="#cfcfcf" stroke-width=".8"/>
<rect x="1283" y="705" width="10" height="8" fill="#dadada"/><path d="M1285 705V703A3 3 0 0 1 1291 703V705" fill="none" stroke="#dadada"/>
<!-- layer rows icons -->
<use href="#eye" x="1161.500" y="737"/><use href="#eye" x="1161.500" y="772.500"/><use href="#eye" x="1161.500" y="806.500"/>
<path d="M1179 732V725.500H1187M1205 725.500H1213.500V732M1213.500 740V747.500H1205M1187 747.500H1179V740" fill="none" stroke="#f0f0f0" stroke-width="1.200"/>
<text x="1197" y="743" text-anchor="middle" font-family="Liberation Serif" font-weight="bold" font-size="14" fill="#e0e0e0">T</text>
<rect x="1190" y="762" width="28" height="20" fill="#424242" opacity=".7"/>
<circle cx="1204.500" cy="771.500" r="3" fill="#f0f0f0"/><rect x="1211.500" y="766.500" width="8" height="8" fill="none" stroke="#d0d0d0"/><path d="M1211.500 766.500L1219.500 774.500M1219.500 766.500L1211.500 774.500" stroke="#d0d0d0" stroke-width=".7"/>
<!-- smart object thumb -->
<rect x="1236.500" y="755.500" width="31" height="31" fill="#f4f4f6" stroke="#222"/>
<g>
<rect x="1237" y="756" width="6" height="6" fill="#ffffff"/><rect x="1243" y="756" width="6" height="6" fill="#eef2f6"/><rect x="1249" y="756" width="6" height="6" fill="#fbeef0"/><rect x="1255" y="756" width="6" height="6" fill="#ffffff"/><rect x="1261" y="756" width="6" height="6" fill="#e4e8f0"/>
<rect x="1237" y="762" width="6" height="6" fill="#dfe9f1"/><rect x="1243" y="762" width="6" height="6" fill="#c9d8e6"/><rect x="1249" y="762" width="6" height="6" fill="#f4f6f8"/><rect x="1255" y="762" width="6" height="6" fill="#dde6ee"/><rect x="1261" y="762" width="6" height="6" fill="#fff"/>
<rect x="1237" y="768" width="6" height="6" fill="#a8c1da"/><rect x="1243" y="768" width="6" height="6" fill="#e8eff4"/><rect x="1249" y="768" width="6" height="6" fill="#b9cde0"/><rect x="1255" y="768" width="6" height="6" fill="#f5f7f9"/><rect x="1261" y="768" width="6" height="6" fill="#c6d4e4"/>
<rect x="1237" y="774" width="6" height="6" fill="#fff"/><rect x="1243" y="774" width="6" height="6" fill="#9db7d0"/><rect x="1249" y="774" width="6" height="6" fill="#d3e0ea"/><rect x="1255" y="774" width="6" height="6" fill="#f7e6ea"/><rect x="1261" y="774" width="6" height="6" fill="#fff"/>
<rect x="1237" y="780" width="6" height="6" fill="#fff"/><rect x="1243" y="780" width="6" height="6" fill="#e8eef3"/><rect x="1249" y="780" width="6" height="6" fill="#c7d6e3"/><rect x="1255" y="780" width="6" height="6" fill="#fff"/><rect x="1261" y="780" width="6" height="6" fill="#f3f3f5"/>
</g>
<rect x="1257.500" y="776.500" width="9" height="9" fill="#333" stroke="#ddd"/><path d="M1260 783L1264 779" stroke="#ddd"/>
<path d="M1389.500 803V801A3 3 0 0 1 1395.500 801V803" fill="none" stroke="#bdbdbd"/><rect x="1387.500" y="803.500" width="10" height="7" fill="none" stroke="#bdbdbd"/>
<!-- layer bottom -->
<path d="M1231 845H1241M1234 842H1230.500A3 3 0 0 0 1230.500 848H1234M1237 842H1240.500A3 3 0 0 1 1240.500 848H1237" fill="none" stroke="#7a7a7a" stroke-width="1.200"/>
<text x="1258" y="850" font-family="Liberation Serif" font-style="italic" font-size="15" fill="#d0d0d0">fx</text>
<rect x="1283" y="840" width="13" height="10" fill="#d0d0d0"/><circle cx="1289.500" cy="845" r="3" fill="#535353"/>
<circle cx="1317.500" cy="845" r="5.500" fill="#d0d0d0"/><path d="M1321 841L1313.500 849A5.500 5.500 0 0 0 1321 841Z" fill="#535353"/>
<path d="M1338 841H1343L1344 842.500H1350V850H1338Z" fill="#d0d0d0"/>
<rect x="1366.500" y="840.500" width="10" height="10" fill="none" stroke="#d0d0d0"/><path d="M1369 845.500H1374M1371.500 843V848" stroke="#d0d0d0"/>
<path d="M1392 842H1403M1396 842V840H1399V842M1393.500 843V851H1401.500V843M1396 844.500V849.500M1399 844.500V849.500" fill="none" stroke="#d0d0d0"/>
<polygon points="1268,851 1271,851 1269.500,853" fill="#ddd"/><polygon points="1322,851 1325,851 1323.500,853" fill="#ddd"/>
<path d="M301 845L305 849.500L301 854" fill="none" stroke="#cfcfcf"/>
</svg>

<!-- menu text -->
<div class="t m" style="left:39px;top:8px">文件(F)</div>
<div class="t m" style="left:88px;top:8px">编辑(E)</div>
<div class="t m" style="left:137px;top:8px">图像(I)</div>
<div class="t m" style="left:183px;top:8px">图层(L)</div>
<div class="t m" style="left:232px;top:8px">文字(Y)</div>
<div class="t m" style="left:282px;top:8px">选择(S)</div>
<div class="t m" style="left:332px;top:8px">滤镜(T)</div>
<div class="t m" style="left:382px;top:8px">3D(D)</div>
<div class="t m" style="left:425px;top:8px">视图(V)</div>
<div class="t m" style="left:476px;top:8px">窗口(W)</div>
<div class="t m" style="left:530px;top:8px">帮助(H)</div>
<!-- options text -->
<div class="t" style="left:135px;top:42px;letter-spacing:1.500px">自动选择:</div>
<div class="t" style="left:219px;top:42px;letter-spacing:1px">图层</div>
<div class="t" style="left:302px;top:42px;letter-spacing:1.100px">显示变换控件</div>
<div class="t dd" style="left:712px;top:42px;letter-spacing:1px"><span style="color:#6f7f8c">3D</span> 模式:</div>
<!-- tabs -->
<div class="t d" style="left:88px;top:77px;letter-spacing:.36px">未标题-1 @ 100%(RGB/8#) *</div>
<div class="t" style="left:287px;top:77px;color:#e2e2e2;letter-spacing:.36px">未标题-2 @ 100% (图层 1, RGB/8#) *</div>
<!-- status -->
<div class="t" style="left:85px;top:842px;color:#e0e0e0;letter-spacing:.4px">100%</div>
<div class="b" style="left:126px;top:842px;width:172px;height:15px;overflow:hidden"><div class="t" style="left:-7px;top:1px;color:#cfcfcf;letter-spacing:.25px">217.5 毫米 x 176.39 毫米 (72 ppi)</div></div>
<!-- color panel text -->
<div class="t s" style="left:1154px;top:87px">颜色</div>
<div class="t d" style="left:1196px;top:87px">色板</div>
<div class="t d" style="left:1237px;top:87px">渐变</div>
<div class="t d" style="left:1280px;top:87px">图案</div>
<div class="t" style="left:1193px;top:125px;color:#c8c8c8">H</div>
<div class="t" style="left:1194px;top:152px;color:#c8c8c8">S</div>
<div class="t" style="left:1193px;top:179px;color:#c8c8c8">B</div>
<div class="t" style="left:1359px;top:125px;letter-spacing:.5px">3</div>
<div class="t" style="left:1359px;top:152px;letter-spacing:.5px">81</div>
<div class="t" style="left:1359px;top:179px;letter-spacing:.5px">90</div>
<div class="t" style="left:1400px;top:152px;color:#c8c8c8">%</div>
<div class="t" style="left:1400px;top:179px;color:#c8c8c8">%</div>
<div class="t" style="left:1471px;top:98px;color:#e0e0e0">学习</div>
<div class="t" style="left:1471px;top:139px;color:#e0e0e0">库</div>
<!-- layers text -->
<div class="t s" style="left:1155px;top:572px">属性</div>
<div class="t s" style="left:1155px;top:604px">图层</div>
<div class="t d" style="left:1196px;top:604px">通道</div>
<div class="t d" style="left:1238px;top:604px">路径</div>
<div class="t" style="left:1173px;top:640px;letter-spacing:1px">类型</div>
<div class="t" style="left:1160px;top:670px;letter-spacing:1px">正常</div>
<div class="t" style="left:1276px;top:669px;color:#c8c8c8;letter-spacing:1px">不透明度:</div>
<div class="t" style="left:1341px;top:669px;letter-spacing:.5px">100%</div>
<div class="t" style="left:1153px;top:699px;color:#c8c8c8;letter-spacing:1px">锁定:</div>
<div class="t" style="left:1303px;top:699px;color:#c8c8c8;letter-spacing:1px">填充:</div>
<div class="t" style="left:1341px;top:699px;letter-spacing:.5px">100%</div>
<div class="t" style="left:1222px;top:730px">图层 1</div>
<div class="t" style="left:1278px;top:765px;letter-spacing:.5px">5b86372...e20 画框</div>
<div class="t" style="left:1222px;top:800px">背景</div>

<!-- watermark -->
<svg width="1522" height="862" viewBox="0 0 1522 862">
<g fill="#fff" fill-opacity=".5">
<ellipse cx="1271" cy="733" rx="10" ry="14" transform="rotate(-8 1271 733)"/>
<ellipse cx="1291" cy="712" rx="10" ry="14"/>
<ellipse cx="1314" cy="713" rx="10" ry="14"/>
<ellipse cx="1330" cy="737" rx="9.500" ry="13" transform="rotate(8 1330 737)"/>
<path d="M1303 733C1314 733 1318 744 1328 752C1338 762 1334 775 1322 776C1313 777 1308 774 1303 774C1296 774 1291 777 1282 776C1272 774 1271 762 1280 752C1288 745 1292 733 1303 733Z"/>
</g>
</svg>
<div class="wm" style="left:1168px;top:729px;font-size:60px;font-weight:bold">Bai</div>
<div class="wm" style="left:1290px;top:748px;font-size:27px;font-weight:bold;color:rgba(70,70,70,.6)">du</div>
<div class="wm" style="left:1345px;top:737px;font-size:45px;font-weight:bold;font-family:'Liberation Sans','Noto Sans CJK SC',sans-serif">经验</div>
<div class="wm" style="left:1168px;top:792px;font-size:33.500px;-webkit-text-stroke:.6px rgba(255,255,255,.5)">jingyan.baidu.com</div>
</body>
</html>
